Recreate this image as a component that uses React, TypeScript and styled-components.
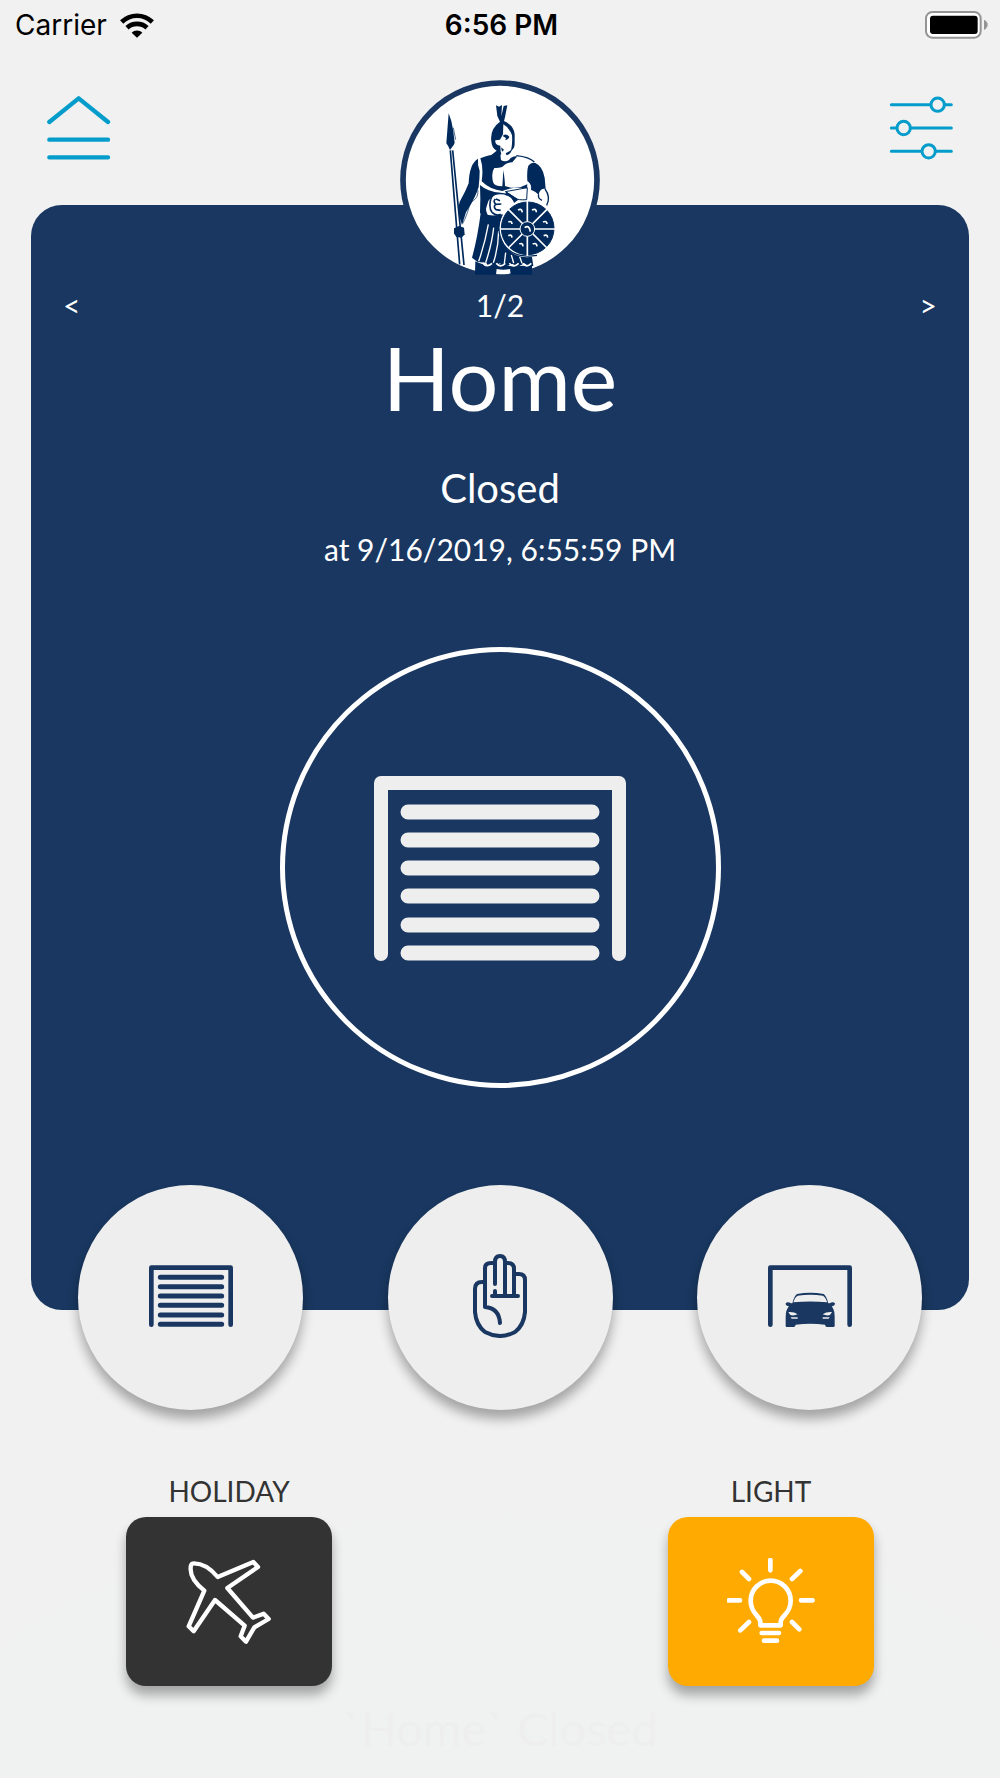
import React from "react";
import styled, { createGlobalStyle } from "styled-components";

const navy = "#193760";
const ink = "#00295b";
const cyan = "#049dcb";
const pale = "#eeeeee";

const GlobalStyle = createGlobalStyle`
  *, *::before, *::after { box-sizing: border-box; }
  body { margin: 0; background: #f1f1f1; }
  button { font: inherit; color: inherit; border: 0; padding: 0; background: none; cursor: pointer; }
  svg { display: block; }
`;

const Screen = styled.div`
  display: flex;
  flex-direction: column;
  min-height: 100vh;
  font-family: Lato, "Liberation Sans", sans-serif;
  background: radial-gradient(ellipse 70% 320px at 50% 100%, #f0f2f1 50%, #f1f1f1 100%);
`;

const StatusBar = styled.div`
  display: grid;
  grid-template-columns: 1fr auto 1fr;
  align-items: center;
  height: 50px;
  padding: 0 12px 0 15px;
  font-family: Inter, "Liberation Sans", sans-serif;
  font-size: 28px;
  color: #000;
`;

const Network = styled.div`
  display: flex;
  align-items: center;
  gap: 13px;
`;

const Clock = styled.time`
  font-weight: 600;
`;

const Battery = styled.svg`
  justify-self: end;
`;

const Header = styled.header`
  display: flex;
  justify-content: space-between;
  align-items: flex-start;
  padding: 30px 47px 0;
  margin-bottom: -75px;
  z-index: 1;
`;

const IconButton = styled.button`
  margin-top: 16px;
`;

const Card = styled.main`
  display: flex;
  flex-direction: column;
  align-items: center;
  margin: 0 31px;
  padding: 80px 32px 222px;
  border-radius: 31px;
  background: ${navy};
  color: #fff;
`;

const Pager = styled.nav`
  display: flex;
  justify-content: space-between;
  align-items: center;
  align-self: stretch;
  font-size: 30px;
  line-height: 40px;
`;

const DoorName = styled.h1`
  margin: 0;
  font-size: 88px;
  font-weight: 400;
  line-height: 104px;
`;

const DoorState = styled.p`
  margin: 29px 0 0;
  font-size: 40px;
  line-height: 60px;
`;

const DoorTime = styled.p`
  margin: 11px 0 0;
  font-size: 30px;
  line-height: 40px;
`;

const Dial = styled.button`
  display: flex;
  align-items: center;
  justify-content: center;
  width: 441px;
  height: 441px;
  margin-top: 78px;
  border: 5px solid #fff;
  border-radius: 50%;
  color: ${pale};
`;

const Controls = styled.div`
  display: flex;
  justify-content: space-between;
  margin-top: -125px;
  padding: 0 78px;
`;

const RoundButton = styled.button`
  display: flex;
  align-items: center;
  justify-content: center;
  width: 225px;
  height: 225px;
  padding-bottom: 4px;
  border-radius: 50%;
  background: ${pale};
  color: ${navy};
  box-shadow: 0 9px 12px rgba(0, 0, 0, 0.32);
`;

const Extras = styled.div`
  display: flex;
  justify-content: space-between;
  margin-top: 63px;
  padding: 0 126px;
`;

const Extra = styled.div`
  display: flex;
  flex-direction: column;
  align-items: center;
`;

const ExtraLabel = styled.label`
  font-size: 28px;
  line-height: 36px;
  margin-bottom: 8px;
  color: #333;
`;

const Tile = styled.button<{ $tone: string }>`
  display: flex;
  align-items: center;
  justify-content: center;
  width: 206px;
  height: 169px;
  border-radius: 20px;
  background: ${(p) => p.$tone};
  color: #fff;
  box-shadow: 0 9px 12px rgba(0, 0, 0, 0.32);
`;

const Toast = styled.p`
  margin: 16px 0 0;
  font-size: 47px;
  line-height: 52px;
  text-align: center;
  color: #efeeee;
`;

function WifiIcon() {
  return (
    <svg width="34" height="25" viewBox="0 0 102 75" aria-hidden="true">
      <g fill="none" stroke="#000" strokeWidth="14">
        <path d="M5 27C31 2 71 2 97 27" />
        <path d="M21 44C38 29 64 29 81 44" />
      </g>
      <path d="M35 59C44 50 58 50 67 59L51 74Z" />
    </svg>
  );
}

function BatteryIcon() {
  return (
    <Battery width="63" height="28" viewBox="0 0 189 84" role="img" aria-label="Battery full">
      <rect x="3" y="3" width="164" height="77" rx="19" fill="#fff" stroke="#949494" strokeWidth="6" />
      <rect x="15" y="14" width="143" height="55" rx="9" />
      <path d="M177 26Q188 32 188 41T177 57Z" fill="#949494" />
    </Battery>
  );
}

function MenuIcon() {
  return (
    <svg width="64" height="64" viewBox="0 0 192 192" aria-hidden="true">
      <path
        d="M7 78L95 7L183 78M7 131H183M7 184H183"
        fill="none" stroke={cyan} strokeWidth="13" strokeLinecap="round" strokeLinejoin="round"
      />
    </svg>
  );
}

function SlidersIcon() {
  return (
    <svg width="64" height="64" viewBox="0 0 192 192" aria-hidden="true">
      <g fill="none" stroke={cyan} strokeWidth="9" strokeLinecap="round">
        <path d="M7 26H124M168 26H187M7 96H22M66 96H187M7 166H97M141 166H187" />
        <circle cx="146" cy="26" r="20" />
        <circle cx="44" cy="96" r="20" />
        <circle cx="119" cy="166" r="20" />
      </g>
    </svg>
  );
}

function KnightLogo() {
  return (
    <svg width="200" height="200" viewBox="30 27 600 600" role="img" aria-label="Centurion">
      <circle cx="330" cy="327" r="291" fill="#fff" stroke={navy} strokeWidth="17" />
      <g fill={ink}>
        {/* spear */}
        <path d="M176 127L169 217L174 224L180 237L191 222L194 216L190 181L184 150Z" />
        <path d="M190 170L197 206" fill="none" stroke={ink} strokeWidth="2" />
        <path d="M181 238L209 580M188 238L222 582" fill="none" stroke={ink} strokeWidth="5" />
        <path d="M192 472L207 465L222 470L224 490L215 500L199 498L192 487Z" />
        {/* plume, helmet and face */}
        <path d="M318 103L327 107L336 102L334 136L341 105L352 103L345 139L342 150Q372 164 374 190L374 218Q374 233 363 239Q368 215 366 193Q358 170 340 160L339 190L330 206L316 208Q314 222 331 224L332 243Q337 250 327 256L304 252L320 239Q305 232 304 211Q299 174 330 152L322 135Z" />
        <path d="M340 192Q350 188 358 197Q356 205 345 207Q352 200 340 197Z" />
        <path d="M333 229L342 236L336 242ZM347 247Q361 241 366 233Q364 248 350 253Z" />
        {/* spear arm */}
        <path d="M264 263Q238 278 236 337Q228 358 213 385Q204 398 206 430L216 462L228 424Q258 377 266 348Q269 320 269 300Q262 280 264 263Z" />
        <path d="M264 358C264 388 250 382 239 402C234 422 226 443 218 458" fill="none" stroke={ink} strokeWidth="2" />
        {/* breastplate */}
        <path d="M271 262Q301 248 331 251L333 267Q344 275 357 267Q366 254 382 256L367 274Q351 274 342 283Q337 292 313 291Q303 304 309 333Q313 346 337 346Q339 317 340 297Q345 329 345 345Q380 358 412 340L411 352Q366 347 337 360Q300 356 275 331Q281 290 271 262Z" />
        <path d="M270 342Q292 362 333 366Q296 371 290 406Q284 421 297 437L270 427Q272 383 270 342Z" />
        <path d="M346 362L412 350L410 386Q384 388 378 382Z" fill="none" stroke={ink} strokeWidth="3" />
        <path d="M302 385Q306 370 322 368Q340 366 352 372Q366 376 374 390M302 385Q296 412 306 424Q318 436 332 430M316 384Q308 392 318 400Q308 406 318 416L332 418M318 400L334 399M318 384L330 389" fill="none" stroke={ink} strokeWidth="5" />
        <path d="M350 362L385 386L372 396Q366 376 346 368Z" />
        {/* shield arm */}
        <path d="M379 254Q418 258 433 273" fill="none" stroke={ink} strokeWidth="4" />
        <path d="M415 284Q424 272 436 276Q458 286 464 320L467 354Q450 351 446 371Q438 362 423 356Q426 340 412 330Q410 300 415 284Z" />
        <path d="M465 354Q483 378 470 403M446 370Q442 382 456 388" fill="none" stroke={ink} strokeWidth="4" />
        {/* skirt and legs */}
        <path d="M272 427Q302 438 338 430L352 530L425 552L430 585Q414 590 404 577L386 586Q371 590 370 578L348 586Q335 590 331 577L307 586Q293 588 289 575L263 573L246 560Q262 504 272 427Z" />
        <path d="M295 460Q285 516 266 571M311 470Q306 518 287 575M326 480Q325 532 310 575M347 545L343 577M364 552L371 576M389 557L396 577" fill="none" stroke="#fff" strokeWidth="4" />
        <path d="M256 571Q292 590 331 579Q374 592 426 580V611H362L360 594Q340 598 320 594L318 611H255Z" />
        <path d="M278 575Q290 592 306 577M319 577Q330 592 346 577M358 577Q370 592 386 577M398 577Q409 592 424 577" fill="none" stroke="#fff" strokeWidth="5" />
      </g>
      {/* shield */}
      <circle cx="412" cy="474" r="85" fill="#fff" />
      <circle cx="413" cy="472" r="79" fill={ink} stroke={ink} strokeWidth="3" />
      <path d="M333 437Q317 478 341 520Q370 564 441 553" fill="none" stroke={ink} strokeWidth="4" />
      <path d="M412 388V555M330 474H496M355 415L471 531M471 415L355 531" stroke="#fff" strokeWidth="5" />
      <circle cx="412" cy="474" r="22" fill={ink} stroke="#fff" strokeWidth="3" />
      <path
        d="M404 470Q418 460 421 482M384 417Q395 411 397 424M426 417Q439 411 439 424M355 453Q365 448 366 459M459 453Q471 448 471 459M355 494Q365 489 366 500M461 494Q472 489 473 500M388 519Q398 514 399 526M428 519Q440 514 441 526"
        fill="none" stroke="#fff" strokeWidth="5"
      />
    </svg>
  );
}

function GarageFrame() {
  return (
    <path
      d="M7 179V8H245V179" fill="none" stroke="currentColor"
      strokeWidth="14" strokeLinecap="round" strokeLinejoin="round"
    />
  );
}

function GarageIcon({ width }: { width: number }) {
  return (
    <svg width={width} viewBox="0 0 252 186" aria-hidden="true">
      <GarageFrame />
      <path
        d="M34 37H218M34 65H218M34 93H218M34 121H218M34 150H218M34 178H218"
        fill="none" stroke="currentColor" strokeWidth="15" strokeLinecap="round"
      />
    </svg>
  );
}

function GarageCarIcon() {
  return (
    <svg width="84" viewBox="0 0 252 186" aria-hidden="true">
      <GarageFrame />
      <g transform="translate(-51 -45)">
        <path
          fill="currentColor"
          d="M104 228V200Q104 180 114 169Q103 168 104 160Q110 154 120 160L124 160Q130 137 138 132Q178 125 218 132Q226 137 232 160L236 160Q246 154 252 160Q252 168 242 169Q251 180 251 200V228Q251 231 247 231H227Q223 229 222 224Q178 219 134 224Q133 229 129 231H107Q104 231 104 228Z"
        />
        <g fill={pale}>
          <path d="M127 157Q132 141 140 137Q178 132 216 137Q223 141 229 157Q178 152 127 157Z" />
          <path d="M112 186Q130 185 140 193Q128 198 118 195ZM243 186Q225 185 215 193Q227 198 237 195Z" />
          <path d="M119 202H140V206H122ZM236 202H215V206H233Z" />
        </g>
      </g>
    </svg>
  );
}

function HandIcon() {
  return (
    <svg width="54" height="84" viewBox="0 0 54 84" aria-hidden="true">
      <path
        d="M12 53V14Q12 9 18 9H21M22 30V8Q22 2 27 2T32 8V42M32 9H35Q41 9 41 15V42M41 20H46Q52 20 52 26V58Q51 71 42 78Q27 86 12 78Q3 71 2 58V35Q2 28 9 28H12M19 42H45M22 37V42M12 53Q26 54 27 69"
        fill="none" stroke="currentColor" strokeWidth="4" strokeLinecap="round" strokeLinejoin="round"
      />
    </svg>
  );
}

function PlaneIcon() {
  return (
    <svg width="88" height="88" viewBox="225 290 264 264" aria-hidden="true">
      <path
        d="M323 347L430 302L444 317L352 380L429 469L461 457L476 473L433 498L408 541L392 525L404 493L315 416L251 510L236 495L283 388C250 362 238 335 243 312Q245 306 252 306C282 306 305 325 323 347Z"
        fill="none" stroke="currentColor" strokeWidth="13" strokeLinejoin="round"
      />
    </svg>
  );
}

function BulbIcon() {
  return (
    <svg width="88" height="88" viewBox="231 295 264 264" aria-hidden="true">
      <path
        d="M331 497V487C331 468 302 464 302 423A60 60 0 0 1 422 423C422 464 392 468 392 487V497ZM335 520H387M342 543H381M361 301V332M276 337L297 358M451 334L426 358M236 422H270M453 422H488M271 512L297 487M426 487L448 509"
        fill="none" stroke="currentColor" strokeWidth="14" strokeLinecap="round" strokeLinejoin="round"
      />
    </svg>
  );
}

export default function App() {
  return (
    <Screen>
      <GlobalStyle />
      <StatusBar>
        <Network>
          <span>Carrier</span>
          <WifiIcon />
        </Network>
        <Clock>6:56 PM</Clock>
        <BatteryIcon />
      </StatusBar>
      <Header>
        <IconButton aria-label="Menu"><MenuIcon /></IconButton>
        <KnightLogo />
        <IconButton aria-label="Settings"><SlidersIcon /></IconButton>
      </Header>
      <Card>
        <Pager aria-label="Doors">
          <button aria-label="Previous door">&lt;</button>
          <span>1/2</span>
          <button aria-label="Next door">&gt;</button>
        </Pager>
        <DoorName>Home</DoorName>
        <DoorState>Closed</DoorState>
        <DoorTime>at 9/16/2019, 6:55:59 PM</DoorTime>
        <Dial aria-label="Toggle door"><GarageIcon width={252} /></Dial>
      </Card>
      <Controls>
        <RoundButton aria-label="Close"><GarageIcon width={84} /></RoundButton>
        <RoundButton aria-label="Stop"><HandIcon /></RoundButton>
        <RoundButton aria-label="Open"><GarageCarIcon /></RoundButton>
      </Controls>
      <Extras>
        <Extra>
          <ExtraLabel htmlFor="holiday">HOLIDAY</ExtraLabel>
          <Tile id="holiday" $tone="#333333"><PlaneIcon /></Tile>
        </Extra>
        <Extra>
          <ExtraLabel htmlFor="light">LIGHT</ExtraLabel>
          <Tile id="light" $tone="#ffaa00"><BulbIcon /></Tile>
        </Extra>
      </Extras>
      <Toast role="status">`Home` Closed</Toast>
    </Screen>
  );
}
